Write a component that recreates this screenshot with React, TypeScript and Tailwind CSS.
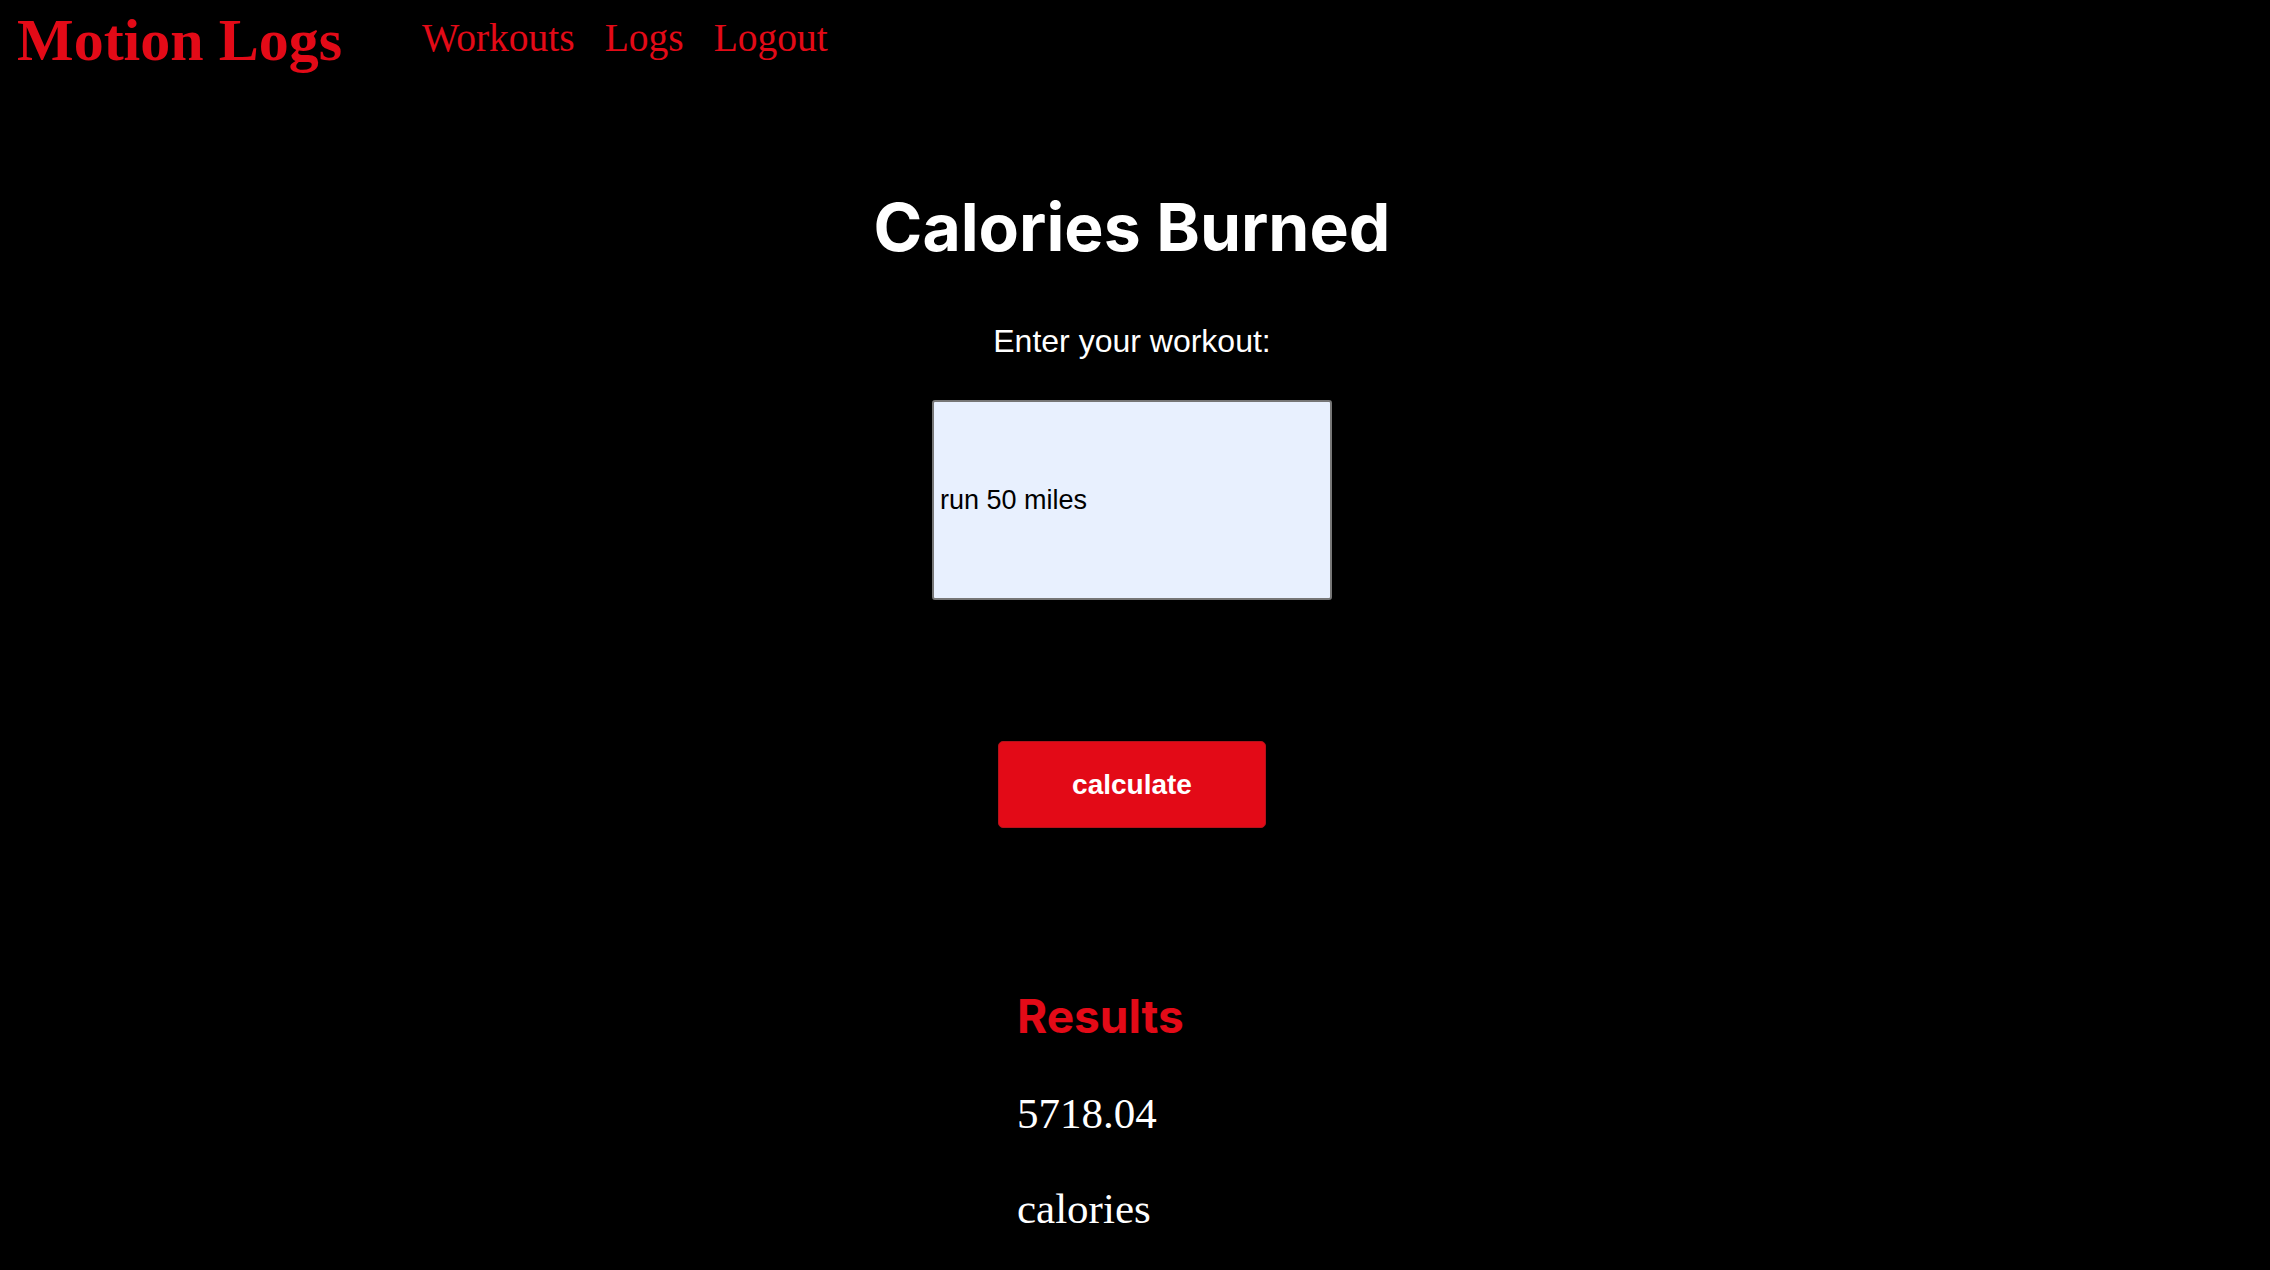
import React from "react";

export default function App() {
  return (
    <div className="min-h-[1270px] w-full bg-black font-['Liberation_Serif',serif]">
      <header className="flex items-start pl-[17px]">
        <div className="mt-[10px] text-[60px] font-bold leading-none text-[#e30a17]">Motion Logs</div>
        <nav className="ml-[80px] mt-[19px] flex gap-[30px] text-[39.5px] leading-none text-[#e30a17]">
          <a href="#">Workouts</a>
          <a href="#">Logs</a>
          <a href="#">Logout</a>
        </nav>
      </header>
      <main className="flex flex-col items-center pr-[6px]">
        <h1 className="mt-[124px] font-['Inter','Liberation_Sans',sans-serif] text-[66px] font-bold leading-none text-white">
          Calories Burned
        </h1>
        <label className="mt-[65px] font-['Liberation_Sans',Arial,sans-serif] text-[32px] leading-none text-white">
          Enter your workout:
        </label>
        <input
          type="text"
          defaultValue="run 50 miles"
          className="mt-[43px] h-[200px] w-[400px] rounded-[3px] border-2 border-[#767676] bg-[#e8f0fe] px-[6px] font-['Liberation_Sans',Arial,sans-serif] text-[27px] text-black outline-none"
        />
        <button className="mt-[141px] h-[87px] w-[268px] rounded-[5px] border border-[#b3121a] bg-[#e30a17] font-['Liberation_Sans',Arial,sans-serif] text-[28px] font-bold text-white">
          calculate
        </button>
        <div className="flex w-[230px] flex-col items-start">
          <h2 className="mt-[165px] font-['Inter','Liberation_Sans',sans-serif] text-[46px] font-bold leading-none text-[#e30a17]">
            Results
          </h2>
          <p className="mt-[53px] text-[43px] leading-none text-white">5718.04</p>
          <p className="mt-[52px] text-[43px] leading-none text-white">calories</p>
        </div>
      </main>
    </div>
  );
}
